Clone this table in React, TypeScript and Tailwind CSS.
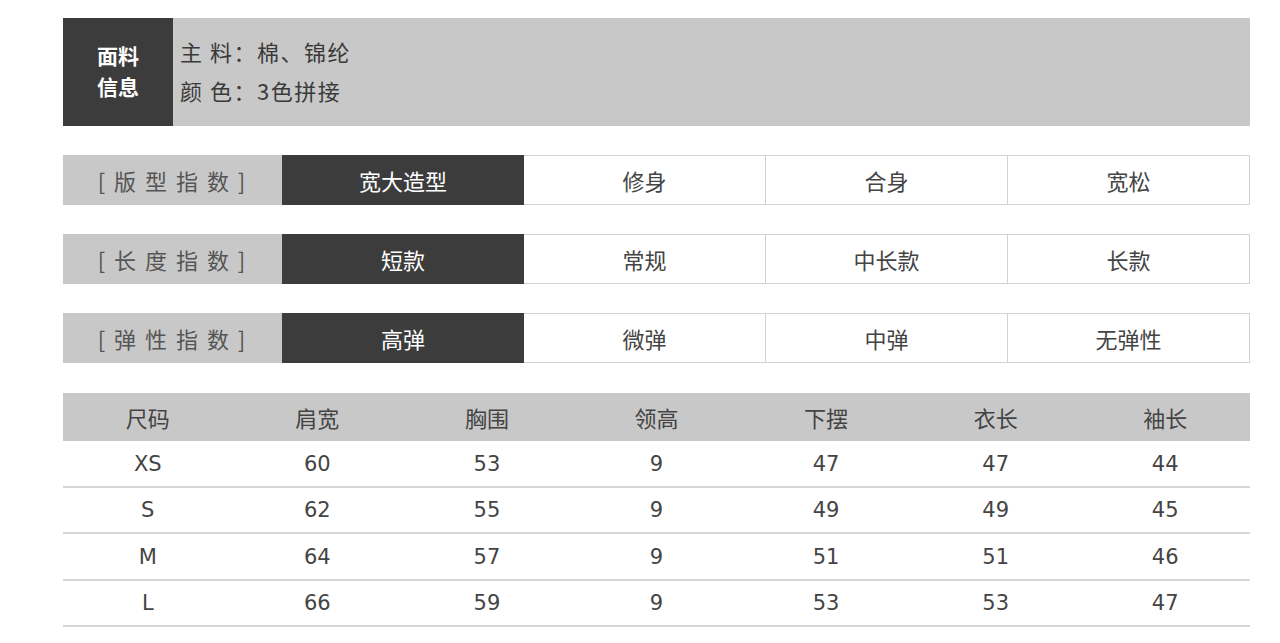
const cjk = { fontFamily: '"Noto Sans CJK SC", "Noto Sans", sans-serif' };
const num = { fontFamily: '"DejaVu Sans", "Noto Sans CJK SC", sans-serif' };

const indexRows = [
  { label: '[ 版 型 指 数 ]', options: ['宽大造型', '修身', '合身', '宽松'] },
  { label: '[ 长 度 指 数 ]', options: ['短款', '常规', '中长款', '长款'] },
  { label: '[ 弹 性 指 数 ]', options: ['高弹', '微弹', '中弹', '无弹性'] },
];

const headers = ['尺码', '肩宽', '胸围', '领高', '下摆', '衣长', '袖长'];
const sizes = [
  ['XS', '60', '53', '9', '47', '47', '44'],
  ['S', '62', '55', '9', '49', '49', '45'],
  ['M', '64', '57', '9', '51', '51', '46'],
  ['L', '66', '59', '9', '53', '53', '47'],
];

function IndexRow({ label, options }: { label: string; options: string[] }) {
  return (
    <div className="flex h-[50px] text-[22px]" style={cjk}>
      <div className="w-[219px] bg-[#c8c8c8] flex items-center justify-center text-[#555] tracking-[2px]">
        {label}
      </div>
      {options.map((opt, i) =>
        i === 0 ? (
          <div key={opt} className="w-[242px] bg-[#3c3c3c] text-white flex items-center justify-center">
            {opt}
          </div>
        ) : (
          <div
            key={opt}
            className="w-[242px] border-y border-r border-[#d2d2d2] bg-white text-[#444] flex items-center justify-center"
          >
            {opt}
          </div>
        )
      )}
    </div>
  );
}

export default function App() {
  return (
    <div className="bg-white w-[1280px] h-[643px] overflow-hidden pt-[18px]">
      <div className="ml-[63px] w-[1187px] flex flex-col">
        {/* fabric info */}
        <div className="flex h-[108px] bg-[#c8c8c8]" style={cjk}>
          <div className="w-[110px] bg-[#3c3c3c] flex flex-col items-center justify-center pb-[3px] text-white font-bold text-[21px] leading-[31px]">
            <div>面料</div>
            <div>信息</div>
          </div>
          <div className="pl-[7px] pt-[14px] text-[22px] leading-[39px] tracking-[1.5px] text-[#3a3a3a]">
            <div>主 料：棉、锦纶</div>
            <div>颜 色：3色拼接</div>
          </div>
        </div>

        <div className="flex flex-col gap-[29px] mt-[29px]">
          {indexRows.map((r) => (
            <IndexRow key={r.label} label={r.label} options={r.options} />
          ))}
        </div>

        {/* size table */}
        <div className="mt-[30px]">
          <div className="grid grid-cols-7 h-[48px] bg-[#c8c8c8] text-[22px] text-[#444]" style={cjk}>
            {headers.map((h) => (
              <div key={h} className="flex items-center justify-center">
                {h}
              </div>
            ))}
          </div>
          {sizes.map((row) => (
            <div
              key={row[0]}
              className="grid grid-cols-7 h-[46.5px] pt-[2px] border-b-2 border-[#d6d6d6] text-[21px] text-[#444]"
              style={num}
            >
              {row.map((c, i) => (
                <div key={i} className="flex items-center justify-center">
                  {c}
                </div>
              ))}
            </div>
          ))}
        </div>
      </div>
    </div>
  );
}
